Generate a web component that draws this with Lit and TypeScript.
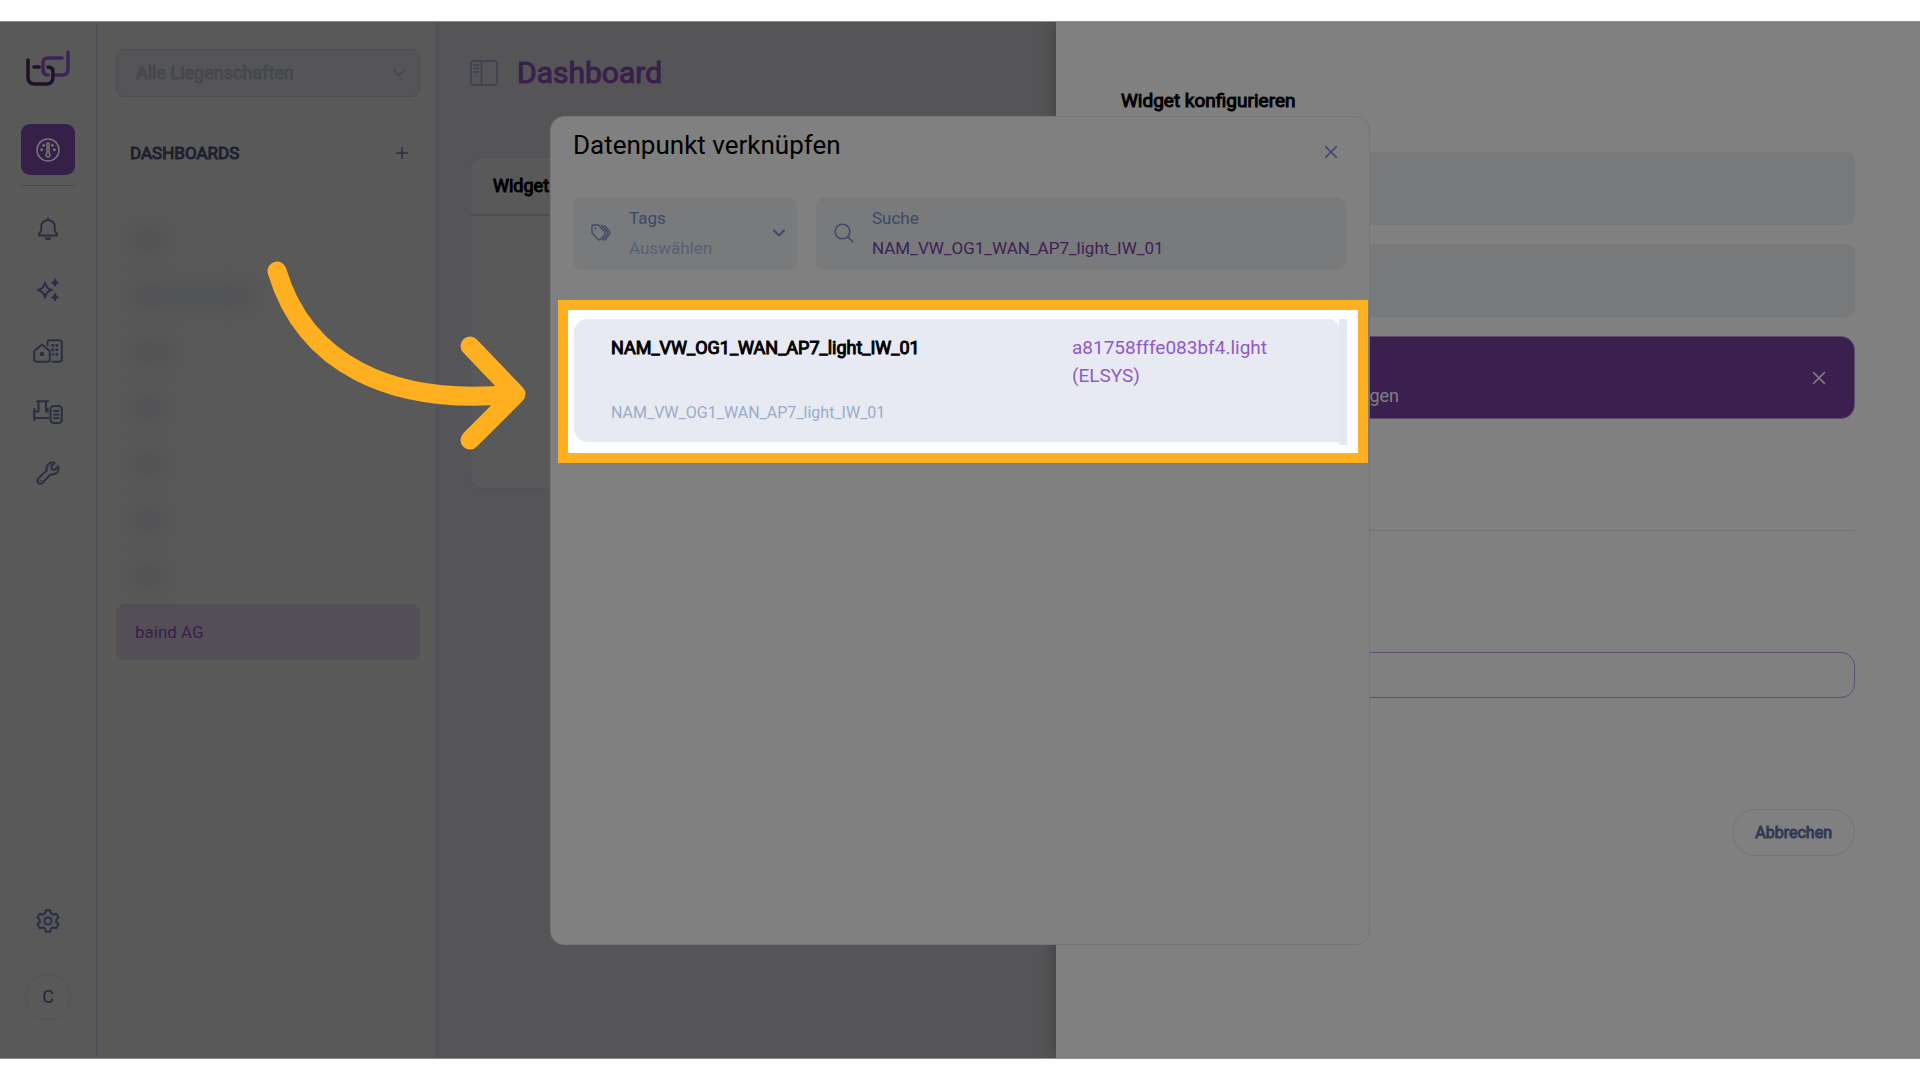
import { LitElement, html, svg, css } from "lit";
import { customElement, state } from "lit/decorators.js";

const icon = (w: number, h: number, body: unknown, cls = "") =>
  html`<svg class="icon ${cls}" width=${w} height=${h} viewBox="0 0 ${w} ${h}" aria-hidden="true">${body}</svg>`;

const logo = icon(44, 36, svg`
  <path class="logo-light" d="M36 8H22Q17 8 17 13V20Q17 25 22 25M30 25H36Q42 25 42 19V2"/>
  <path class="logo-dark" d="M2 10V27Q2 34 9 34H20Q27 34 27 27V22Q27 17 22 17M8 17H13"/>`, "logo");

const gauge = icon(24, 24, svg`
  <circle cx="12" cy="12" r="11"/>
  <path d="M11 15.2V5.8a1 1 0 0 1 2 0V15.2a2 2 0 1 1-2 0z"/>
  <g class="fill"><circle cx="5.6" cy="11.8" r="1"/><circle cx="7.6" cy="7.4" r="1"/>
  <circle cx="16.4" cy="7.4" r="1"/><circle cx="18.4" cy="11.8" r="1"/></g>`);

const bell = icon(22, 24, svg`
  <path d="M11 1.2V3M2 18.4V17.2Q4.200 15.200 4.200 12V9.800A6.800 6.800 0 0 1 17.800 9.800V12Q17.800 15.200 20 17.200V18.400Z"/>
  <path class="fill" d="M8 21H14Q13.400 23 11 23T8 21Z"/>`);

const sparkles = icon(24, 24, svg`
  <path d="M9 4.500Q10.300 10.700 16 12Q10.300 13.300 9 19.500Q7.700 13.300 2 12Q7.700 10.700 9 4.500Z"/>
  <path class="fill" d="M19 1Q19.600 4 22.500 4.700Q19.600 5.400 19 8.400Q18.400 5.400 15.500 4.700Q18.400 4 19 1ZM19 15.600Q19.600 18.600 22.500 19.300Q19.600 20 19 23Q18.400 20 15.500 19.300Q18.400 18.600 19 15.600Z"/>`);

const buildings = icon(30, 24, svg`
  <path d="M1.200 12L9 5.600L16.800 12V20.500Q16.800 22.800 14.500 22.800H3.500Q1.200 22.800 1.200 20.500Z"/>
  <path d="M14.500 6V3.500Q14.500 1.200 16.800 1.200H26.500Q28.800 1.200 28.800 3.500V20.500Q28.800 22.800 26.500 22.800H19.500"/>
  <g class="solid"><rect x="7" y="13" width="4" height="4" rx="1"/>
  <rect x="18.500" y="5" width="2.600" height="2.600"/><rect x="22.500" y="5" width="2.600" height="2.600"/>
  <rect x="18.500" y="9.500" width="2.600" height="2.600"/><rect x="22.500" y="9.500" width="2.600" height="2.600"/>
  <rect x="19" y="14" width="2" height="2.600"/><rect x="22.500" y="14" width="2.600" height="2.600"/></g>`);

const meter = icon(30, 24, svg`
  <path d="M1.200 9V20M1.200 11.500H5.500V2M13 2V11.500H15M1.200 18H15M4 1.200H15M14.500 9V11.500"/>
  <rect x="17.500" y="6" width="11.300" height="17" rx="3.500"/>
  <path d="M21 11H25.500M21 14.500H25.500M21 18H25.500"/>`);

const wrench = icon(24, 24, svg`
  <path d="M18.600 1.800Q14.800 .6 12.300 3.200Q10 5.600 10.800 9.200L2 17.800Q.4 19.800 2.200 21.800Q4.200 23.600 6.200 22L14.800 13.200Q18.400 14 20.800 11.700Q23.400 9.200 22.200 5.400L18.600 8.800L15.800 8.200L15.200 5.400Z"/>
  <circle class="fill" cx="4.400" cy="19.600" r=".5"/>`);

const gear = icon(24, 24, svg`
  <path d="M9.800 1.200H14.200L14.900 4.300L17.300 5.700L20.300 4.700L22.600 8.500L20.200 10.700V13.300L22.600 15.500L20.300 19.300L17.300 18.300L14.900 19.700L14.200 22.800H9.800L9.100 19.700L6.700 18.300L3.700 19.300L1.400 15.500L3.800 13.300V10.700L1.400 8.500L3.700 4.700L6.700 5.700L9.100 4.300Z"/>
  <circle cx="12" cy="12" r="3.600"/>`);

const panel = icon(28, 26, svg`
  <rect x="1" y="1" width="26" height="24" rx="3"/><path d="M11.500 1V25M4 5H9M4 8.500H9M4 12H9"/>`, "thin");

const tags = icon(20, 18, svg`
  <path d="M1 2Q1 1 2 1H7.500L14 8Q14.800 9 14 10L9.200 15.600Q8.300 16.400 7.400 15.600L1 9Z"/>
  <path d="M10.500 1.200L16.500 7.800Q17.200 9 16.500 10L11.500 16M13.500 1.800L18.600 7.600Q19.400 9 18.600 10.200L14 16"/>
  <circle class="fill" cx="4.500" cy="4.500" r=".5"/>`, "hair");

const search = icon(20, 20, svg`<circle cx="8.500" cy="8.500" r="7.300"/><path d="M13.800 13.800L19 19"/>`, "thin");
const chevron = icon(12, 8, svg`<path d="M1 1.500L6 6.500L11 1.500"/>`);
const cross = icon(14, 14, svg`<path d="M1.500 1.500L12.500 12.500M12.500 1.500L1.500 12.500"/>`, "cross");
const plus = icon(12, 12, svg`<path d="M6 0V12M0 6H12"/>`, "thin");

const tool = (label: string, glyph: unknown) =>
  html`<button class="tool" type="button" aria-label=${label}>${glyph}</button>`;

@customElement("app-root")
export class AppRoot extends LitElement {
  @state() private query = "NAM_VW_OG1_WAN_AP7_light_IW_01";
  private hiddenWidths = [32, 120, 40, 32, 32, 32, 32];

  static styles = css`
    :host {
      display: block;
      background: #fff;
      font-family: Roboto, "Liberation Sans", sans-serif;
      font-size: 18px;
      line-height: 28px;
    }
    * { box-sizing: border-box; }
    button, input, select { font: inherit; color: inherit; background: none; border: 0; padding: 0; margin: 0; }
    select { appearance: none; }
    input, select { outline: 0; min-width: 0; }
    h1, h2, h3, p { margin: 0; font-weight: 400; }
    .icon { display: block; flex: none; fill: none; stroke: currentColor; stroke-width: 2; stroke-linecap: round; stroke-linejoin: round; }
    .thin { stroke-width: 1.500; }
    .hair { stroke-width: 1.300; }
    .cross { stroke-width: 1.700; }
    .fill { fill: currentColor; stroke-width: 1; }
    .solid { fill: currentColor; stroke: none; }
    .strong { -webkit-text-stroke: 1px currentColor; }

    .page { min-height: 100vh; padding: 21px 0; display: flex; }
    .stage {
      position: relative; flex: 1; display: flex; overflow: hidden;
      background: #555557; border: solid #8c8c8c; border-width: 1px 0;
    }

    .rail {
      width: 97px; flex: none; display: flex; flex-direction: column; align-items: center;
      background: #595959; border-right: 1px solid #4d4d57; color: #2a2e42; padding: 28px 0 38px;
    }
    .logo { stroke-width: 3.500; }
    .logo-light { stroke: #3e2359; }
    .logo-dark { stroke: #201028; }
    .tool { display: grid; place-items: center; width: 54px; height: 61px; }
    .tool.active { height: 51px; margin-top: 38px; border-radius: 9px; background: #352049; color: #777; }
    .tool.active .icon { stroke-width: 1.500; }
    .rule { width: 54px; height: 1px; background: #48484a; margin: 10px 0 12px; }
    .bottom { margin-top: auto; display: flex; flex-direction: column; align-items: center; gap: 23px; }
    .avatar { width: 46px; height: 46px; border: 1px solid #525252; border-radius: 50%; font-size: 18px; color: #24263a; }

    .side { width: 340px; flex: none; background: #595959; border-right: 1px solid #4d4d57; padding: 27px 16px 0 19px; }
    .site {
      display: flex; align-items: center; height: 48px; padding: 0 14px 0 19px;
      border: 1px solid #4d4d55; border-radius: 9px; background: #555557; color: #45484c;
    }
    .site select { flex: 1; }
    .side-head { display: flex; align-items: center; justify-content: space-between; padding: 0 12px 0 14px; margin: 42px 0 45px; color: #1e2030; }
    .side-head h2 { font-size: 17px; line-height: 28px; }
    .side-head button { color: #2a2e42; }
    .item { display: flex; align-items: center; height: 56px; padding: 0 19px; border-radius: 9px; font-size: 17px; color: #38204b; text-decoration: none; }
    .item.hidden { padding: 0 15px; }
    .item.active { background: #544f56; }
    .smudge { height: 16px; border-radius: 8px; background: #4e4f53; filter: blur(10px); }

    .main { flex: 1; min-width: 0; padding: 29px 33px; }
    .crumb { display: flex; align-items: center; gap: 19px; color: #3a4150; height: 44px; }
    .crumb h1 { font-size: 30px; line-height: 44px; color: #38204b; }
    .card { margin-top: 62px; width: 560px; height: 332px; border: 1px solid #50505a; border-radius: 12px; background: #595959; }
    .card h3 { padding: 14px 22px 14px; border-bottom: 2px solid #4c4c53; font-size: 18px; color: #000; }

    .drawer {
      position: absolute; top: 0; right: 0; bottom: 0; width: 45%;
      background: #808080; box-shadow: 0 0 16px rgba(0, 0, 0, .3);
      padding: 65px 65px 0; display: flex; flex-direction: column;
    }
    .drawer h2 { font-size: 19px; color: #000; }
    .slot { height: 73px; border-radius: 9px; background: #78797b; margin-bottom: 19px; }
    .drawer h2 + .slot { margin-top: 37px; }
    .banner {
      height: 83px; display: flex; align-items: center; justify-content: space-between; gap: 20px;
      border-radius: 14px; background: #3b204f; border: 1px solid #5b4a68; color: #808080; padding: 0 28px;
    }
    .banner p { padding: 37px 0 0; width: 249px; text-align: right; font-size: 18px; }
    .divider { height: 1px; background: #747476; margin: 111px 0 121px; }
    .line-input { width: 100%; height: 46px; border: 1px solid #5f4c75; border-radius: 14px; padding: 0 16px; }
    .cancel { align-self: flex-end; margin-top: 111px; height: 47px; padding: 0 22px; border: 1px solid #747476; border-radius: 24px; font-size: 16px; color: #323a56; }

    .overlay { position: absolute; inset: 0; display: flex; justify-content: center; padding: 94px 16px 113px; }
    .modal { position: relative; width: 820px; border: 1px solid #74747a; border-radius: 14px; background: #808080; }
    .modal-head { display: flex; align-items: center; justify-content: space-between; padding: 10px 31px 0 22px; }
    .modal-head h2 { font-size: 26px; line-height: 36px; color: #000; }
    .modal-head button { color: #3d4664; padding: 13px 0 0; }
    .filters { display: flex; gap: 19px; padding: 34px 23px 30px 22px; }
    .field { display: flex; align-items: center; gap: 18px; height: 73px; border-radius: 9px; background: #787a7c; color: #3f4864; padding: 0 12px 2px 18px; }
    .field.tags { width: 224px; }
    .field.query { flex: 1; }
    .stack { flex: 1; min-width: 0; display: flex; flex-direction: column; font-size: 17px; }
    .stack label { line-height: 30px; }
    .stack input, .stack select { height: 30px; line-height: 30px; width: 100%; }
    .stack input { color: #3e2153; }
    .stack select { color: #566074; }

    .focus { display: flex; margin: 0 1px 0 7px; border: 10px solid #ffb020; background: #fff; padding: 9px 11px 8px 6px; }
    .result {
      flex: 1; display: grid; grid-template-columns: 461px 1fr; row-gap: 11px; text-align: left;
      padding: 15px 37px 17px; margin-bottom: 3px; border-radius: 14px 9px 0 14px; background: #e7eaf2;
    }
    .result .name { color: #000; }
    .result .code { color: #9159c8; font-size: 19px; }
    .result .sub { color: #9cabc9; font-size: 16px; line-height: 24px; }
    .track { width: 8px; background: #e4e8f0; }
    .arrow { position: absolute; left: -290px; top: 138px; fill: none; stroke: #ffb020; stroke-width: 19; stroke-linecap: round; stroke-linejoin: round; pointer-events: none; }
  `;

  render() {
    return html`<div class="page"><div class="stage">
      <nav class="rail" aria-label="Navigation">
        ${logo}
        <button class="tool active" type="button" aria-label="Dashboard">${gauge}</button>
        <div class="rule"></div>
        ${tool("Alarme", bell)}${tool("Assistent", sparkles)}${tool("Liegenschaften", buildings)}
        ${tool("Geräte", meter)}${tool("Service", wrench)}
        <div class="bottom">
          ${tool("Einstellungen", gear)}
          <button class="avatar" type="button">C</button>
        </div>
      </nav>

      <aside class="side">
        <div class="site">
          <select class="strong" aria-label="Liegenschaft"><option>Alle Liegenschaften</option></select>${chevron}
        </div>
        <div class="side-head">
          <h2 class="strong">DASHBOARDS</h2>
          <button type="button" aria-label="Hinzufügen">${plus}</button>
        </div>
        ${this.hiddenWidths.map((w) => html`<div class="item hidden"><span class="smudge" style="width:${w}px"></span></div>`)}
        <a class="item active" href="#baind">baind AG</a>
      </aside>

      <main class="main">
        <div class="crumb">${panel}<h1 class="strong">Dashboard</h1></div>
        <section class="card"><h3 class="strong">Widget</h3></section>
      </main>

      <section class="drawer">
        <h2 class="strong">Widget konfigurieren</h2>
        <div class="slot"></div>
        <div class="slot"></div>
        <div class="banner"><p>gen</p><button type="button" aria-label="Entfernen">${cross}</button></div>
        <div class="divider"></div>
        <input class="line-input" type="text" aria-label="Titel">
        <button class="cancel strong" type="button">Abbrechen</button>
      </section>

      <div class="overlay">
        <section class="modal" role="dialog" aria-labelledby="dialog-title">
          <header class="modal-head">
            <h2 id="dialog-title">Datenpunkt verknüpfen</h2>
            <button type="button" aria-label="Schliessen">${cross}</button>
          </header>
          <div class="filters">
            <div class="field tags">
              ${tags}
              <div class="stack"><label for="tags">Tags</label><select id="tags"><option>Auswählen</option></select></div>
              ${chevron}
            </div>
            <div class="field query">
              ${search}
              <div class="stack"><label for="query">Suche</label>
                <input id="query" type="text" .value=${this.query}
                  @input=${(e: InputEvent) => (this.query = (e.target as HTMLInputElement).value)}></div>
            </div>
          </div>
          <div class="focus">
            <button class="result" type="button">
              <span class="name strong">NAM_VW_OG1_WAN_AP7_light_IW_01</span>
              <span class="code">a81758fffe083bf4.light<br>(ELSYS)</span>
              <span class="sub">NAM_VW_OG1_WAN_AP7_light_IW_01</span>
            </button>
            <div class="track"></div>
          </div>
          <svg class="arrow" width="275" height="200" viewBox="260 255 275 200" aria-hidden="true">
            <path d="M276 271C303 362 388 407 514 394M469 346L515 394L469 440"/>
          </svg>
        </section>
      </div>
    </div></div>`;
  }
}
